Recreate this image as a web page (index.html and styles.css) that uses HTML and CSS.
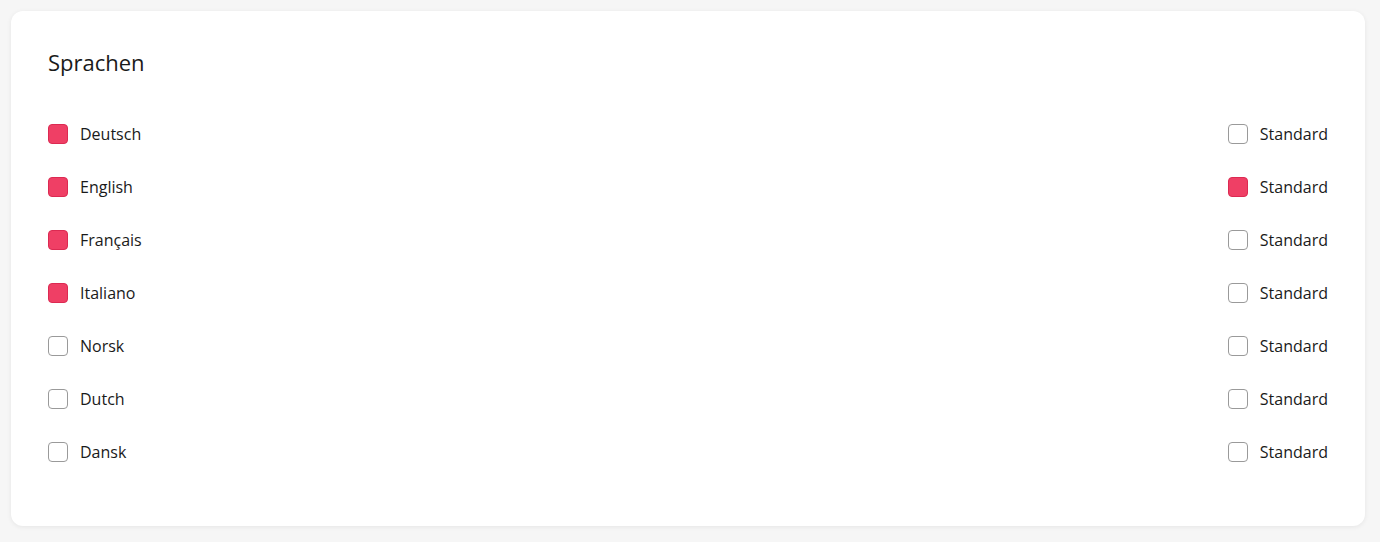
FILE: index.html
```html
<!DOCTYPE html>
<html lang="de">
<head>
  <meta charset="UTF-8">
  <meta name="viewport" content="width=device-width, initial-scale=1.0">
  <title>Sprachen</title>
  <link rel="stylesheet" href="styles.css">
</head>
<body>
  <div class="card">
    <h2>Sprachen</h2>

    <ul class="languages">
      <li class="row">
        <label class="check"><input type="checkbox" checked><span class="box"></span>Deutsch</label>
        <label class="check"><input type="checkbox"><span class="box"></span>Standard</label>
      </li>
      <li class="row">
        <label class="check"><input type="checkbox" checked><span class="box"></span>English</label>
        <label class="check"><input type="checkbox" checked><span class="box"></span>Standard</label>
      </li>
      <li class="row">
        <label class="check"><input type="checkbox" checked><span class="box"></span>Français</label>
        <label class="check"><input type="checkbox"><span class="box"></span>Standard</label>
      </li>
      <li class="row">
        <label class="check"><input type="checkbox" checked><span class="box"></span>Italiano</label>
        <label class="check"><input type="checkbox"><span class="box"></span>Standard</label>
      </li>
      <li class="row">
        <label class="check"><input type="checkbox"><span class="box"></span>Norsk</label>
        <label class="check"><input type="checkbox"><span class="box"></span>Standard</label>
      </li>
      <li class="row">
        <label class="check"><input type="checkbox"><span class="box"></span>Dutch</label>
        <label class="check"><input type="checkbox"><span class="box"></span>Standard</label>
      </li>
      <li class="row">
        <label class="check"><input type="checkbox"><span class="box"></span>Dansk</label>
        <label class="check"><input type="checkbox"><span class="box"></span>Standard</label>
      </li>
    </ul>
  </div>
</body>
</html>
```

FILE: styles.css
```css
:root {
  --accent: #ef3f65;
  --accent-border: #dc2a52;
  --background: #f6f6f6;
  --white: #fff;
  --text: #1a1a1a;
  --border: #9a9a9a;
}

body {
  font-family: 'Open Sans', 'Lato', sans-serif;
  margin: 0;
  padding: 11px 15px 15px 11px;
  background: var(--background);
  color: var(--text);
}

.card {
  background: var(--white);
  border-radius: 12px;
  padding: 36px 37px 48px;
  box-shadow: 0 1px 5px rgba(0, 0, 0, 0.07);
}

h2 {
  margin: 0;
  font-size: 22px;
  line-height: 30px;
  font-weight: 400;
}

.languages {
  list-style: none;
  margin: 30px 0 0;
  padding: 0;
}

.row {
  display: flex;
  justify-content: space-between;
  align-items: center;
  height: 53px;
}

.check {
  display: flex;
  align-items: center;
  gap: 12px;
  font-size: 16px;
  cursor: pointer;
}

.check input {
  display: none;
}

.box {
  width: 20px;
  height: 20px;
  box-sizing: border-box;
  border: 1px solid var(--border);
  border-radius: 4px;
}

.check input:checked + .box {
  background: var(--accent);
  border-color: var(--accent-border);
}
```
